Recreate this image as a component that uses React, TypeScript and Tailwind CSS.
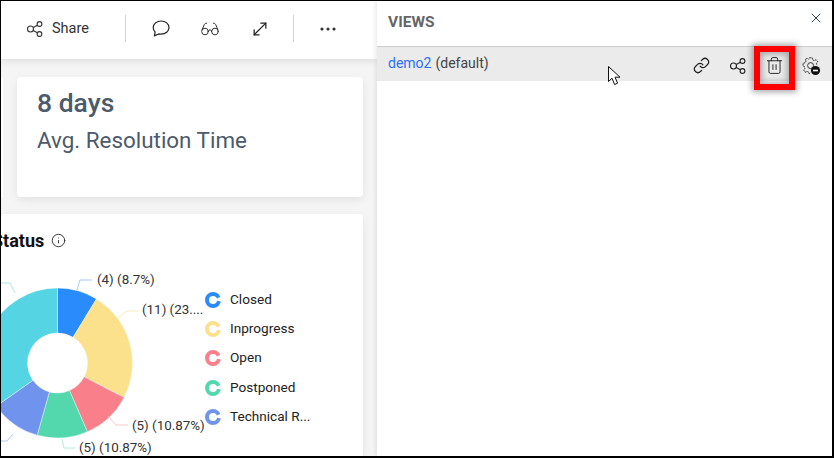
import React from "react";
import { X, Glasses, MoveDiagonal, Trash2, Link as LinkIcon, Info } from "lucide-react";

const CX = 56.5, CY = 363, R = 75, r = 30;
const slices: [number, number, string][] = [
  [0, 31.3, "#2a8bfc"],
  [31.3, 117.4, "#fbe18c"],
  [117.4, 156.5, "#f9808a"],
  [156.5, 195.7, "#53d8ae"],
  [195.7, 234.9, "#7094ee"],
  [234.9, 360, "#55d4e4"],
];
const pt = (rad: number, a: number) => {
  const t = (a * Math.PI) / 180;
  return `${(CX + rad * Math.sin(t)).toFixed(2)} ${(CY - 268 - rad * Math.cos(t)).toFixed(2)}`;
};
const arc = (a: number, b: number) => {
  const large = b - a > 180 ? 1 : 0;
  return `M${pt(R, a)}A${R} ${R} 0 ${large} 1 ${pt(R, b)}L${pt(r, b)}A${r} ${r} 0 ${large} 0 ${pt(r, a)}Z`;
};

const legend: [string, string][] = [
  ["Closed", "#2a8bfc"],
  ["Inprogress", "#fbe18c"],
  ["Open", "#f9808a"],
  ["Postponed", "#53d8ae"],
  ["Technical R...", "#7094ee"],
];

function ShareIcon({ size = 18, cls = "" }: { size?: number; cls?: string }) {
  return (
    <svg width={size} height={size} viewBox="0 0 18 18" fill="none" stroke="currentColor" strokeWidth="1.1" className={cls}>
      <circle cx="4.5" cy="9" r="3" />
      <circle cx="13.5" cy="4" r="2.4" />
      <circle cx="13.5" cy="14" r="2.4" />
      <path d="M7.2 7.6 11.4 5.2M7.2 10.4l4.2 2.4" />
    </svg>
  );
}

function Bubble() {
  return (
    <svg width="18" height="17" viewBox="0 0 18 17" fill="none" stroke="#222" strokeWidth="1.2" className="ml-[26px]">
      <path d="M9.2 1C4.8 1 1.2 3.8 1.2 7.6c0 1.9.8 3.3 1.9 4.4l-.6 3.8 4.4-1.9c.7.2 1.5.3 2.3.3 4.4 0 7.8-2.9 7.8-6.6S13.6 1 9.2 1Z" />
    </svg>
  );
}

function LegendDot({ color }: { color: string }) {
  return (
    <svg width="16" height="16" viewBox="0 0 16 16" className="shrink-0">
      <circle cx="8" cy="8" r="6" fill="none" stroke={color} strokeWidth="4" />
      <path d="M11 7 16 4.5V9.5L11 8.5Z" fill="#fff" />
    </svg>
  );
}

function Gear() {
  return (
    <svg width="20" height="20" viewBox="0 0 20 20" fill="none" stroke="#333" strokeWidth="1">
      <path d="M8.2 1.8h3l.4 2 1.6.8 1.9-.9 1.6 2-1.2 1.7.3 1.3M9 16.8l-.8 1h-.1l-.4-1.6-1.6-.8-1.9.9-1.5-2.2 1.1-1.6-.2-1.8-1.7-.9.3-2.6 1.9-.4.9-1.6-.7-1.8 2.2-1.2 1.3 1.4" strokeDasharray="2 .6" />
      <circle cx="9.6" cy="9.6" r="3" />
      <circle cx="14.5" cy="14.5" r="4.6" fill="#111" stroke="none" />
      <rect x="12" y="13.7" width="5" height="1.6" fill="#fff" stroke="none" />
    </svg>
  );
}

export default function App() {
  return (
    <div className="relative w-[834px] h-[458px] overflow-hidden border border-black border-r-2 border-b-2 flex bg-white text-[#222] font-['Roboto',sans-serif]">
      {/* left dashboard */}
      <div className="w-[376px] shrink-0 flex flex-col bg-[#f5f5f5]">
        <div className="h-[58px] shrink-0 bg-white shadow-[0_2px_8px_rgba(0,0,0,0.1)] flex items-center pb-[3px] text-[#333]">
          <ShareIcon cls="ml-[25px]" />
          <span className="ml-2 text-[14.5px]">Share</span>
          <div className="w-px h-[27px] bg-[#ccd3da] ml-9" />
          <Bubble />
          <Glasses size={20} strokeWidth={1.2} className="ml-[30px]" />
          <MoveDiagonal size={20} strokeWidth={1.5} className="ml-[30px] text-[#222]" />
          <div className="w-px h-[27px] bg-[#ccd3da] ml-[23px]" />
          <svg width="18" height="4" viewBox="0 0 18 4" className="ml-[25px]" fill="#333">
            <circle cx="3" cy="2" r="1.6" /><circle cx="9" cy="2" r="1.6" /><circle cx="15" cy="2" r="1.6" />
          </svg>
        </div>

        <div className="flex gap-[14px] mt-[18px] h-[120px] shrink-0 pr-[14px]">
          <div className="w-[2px] bg-white shrink-0" />
          <div className="flex-1 bg-white rounded shadow-[0_3px_10px_rgba(0,0,0,0.08)] pl-5 pt-[10px] text-[#4c5a6b]">
            <div className="text-[26.5px] leading-[32px] font-medium">8 days</div>
            <div className="text-[22.4px] leading-[26px] mt-[8px]">Avg. Resolution Time</div>
          </div>
        </div>

        <div className="flex-1 mt-[17px] mr-[14px] bg-white rounded-t shadow-[0_3px_10px_rgba(0,0,0,0.08)] flex flex-col overflow-hidden">
          <div className="flex items-center h-[54px] shrink-0 pb-[2px]">
            <span className="font-bold text-[18px] text-[#111] -ml-[9px]">Status</span>
            <Info size={15} strokeWidth={1.4} className="ml-[7px] text-[#222]" />
          </div>
          <div className="flex flex-1">
            <svg width="204" height="190" className="shrink-0" viewBox="0 0 204 190" overflow="visible">
              {slices.map(([a, b, c]) => (
                <path key={c} d={arc(a, b)} fill={c} stroke="#fff" strokeWidth="0.4" />
              ))}
              <g fill="none" strokeWidth="1">
                <path d="M76 22 79 12H91" stroke="#a9c9f5" />
                <path d="M117 50 126 43H137" stroke="#fbeab5" />
                <path d="M107 148 115 157H127" stroke="#fbc6cb" />
                <path d="M61 171 63 180H74" stroke="#b3ecd8" />
                <path d="M14 25 9 15H0" stroke="#b0e7ef" />
                <path d="M12 166 6 173H0" stroke="#b7c8f4" />
              </g>
              <g fill="#333" fontFamily="Roboto, sans-serif" fontSize="13.4">
                <text x="96" y="16">(4) (8.7%)</text>
                <text x="141" y="46">(11) (23....</text>
                <text x="131" y="162">(5) (10.87%)</text>
                <text x="78" y="184">(5) (10.87%)</text>
              </g>
            </svg>
            <div className="flex flex-col pt-[17px]">
              {legend.map(([t, c]) => (
                <div key={t} className="flex items-center h-[29.4px] text-[13.6px] text-[#222]">
                  <LegendDot color={c} />
                  <span className="ml-[9px] -mt-[2px]">{t}</span>
                </div>
              ))}
            </div>
          </div>
        </div>
      </div>

      {/* views panel */}
      <div className="flex-1 flex flex-col shadow-[-2px_0_4px_rgba(0,0,0,0.08)] bg-white z-10">
        <div className="h-[45px] shrink-0 flex items-center justify-between pl-[11px] pr-[8px]">
          <span className="font-bold text-[15.5px] text-[#666] -mt-[2px]">VIEWS</span>
          <X size={16} strokeWidth={1.5} className="text-[#34495e] mb-[12px]" />
        </div>
        <div className="h-[35px] bg-[#ebebeb] border-t border-[#cccccc] flex items-center pl-[11px] pr-[11px] text-sm">
          <span className="text-[#2d6ff7] -mt-[3px]">demo2</span>
          <span className="text-[#444] ml-1 -mt-[3px]">(default)</span>
          <div className="ml-auto flex items-center text-[#222] mt-[3px]">
            <LinkIcon size={17} strokeWidth={1.7} className="mr-[19px]" />
            <ShareIcon size={18} cls="mr-[18px]" />
            <Trash2 size={19} strokeWidth={1.2} className="mr-[17px]" />
            <Gear />
          </div>
        </div>
        <div className="flex-1" />
      </div>

      {/* overlays */}
      <div className="absolute z-20 left-[753px] top-[45px] w-[41px] h-[44px] border-[6px] border-[#ff0000] shadow-[0_0_6px_2px_rgba(0,0,0,0.35),inset_0_0_6px_2px_rgba(0,0,0,0.3)]" />
      <svg className="absolute z-20 left-[606px] top-[64px]" width="16" height="22" viewBox="0 0 16 22">
        <path d="M1.5 1.5V16.5L5 13.2 7.6 19.5 10.6 18.2 8 12.2H13Z" fill="#fff" stroke="#111" strokeWidth="1" />
      </svg>
    </div>
  );
}
